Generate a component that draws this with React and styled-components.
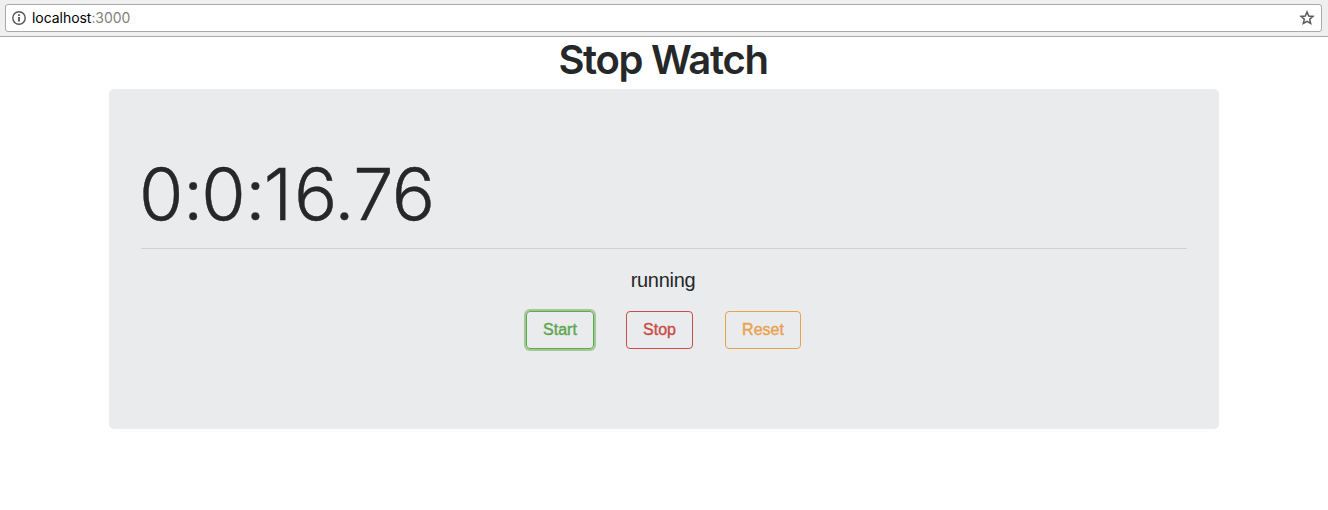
import React from 'react';
import styled, { createGlobalStyle } from 'styled-components';

const Global = createGlobalStyle`
  * { box-sizing: border-box; }
  body { margin: 0; background: #fff; color: #252729; font-family: "Liberation Sans", sans-serif; font-size: 16px; line-height: 1.5; }
`;
const BrowserBar = styled.header`
  height: 37px; padding: 4px 6px 4px 5px; background: #efefef; border-bottom: 1px solid #a9a9a9;
`;
const AddressField = styled.div`
  height: 28px; display: flex; align-items: center; padding: 0 6px; background: #fff;
  border: 1px solid #a9a9a9; border-radius: 3px; font: 14px/20px Inter, sans-serif; color: #000;
`;
const Address = styled.div`flex: 1; margin-left: 6px; letter-spacing: -0.05px; font-feature-settings: "calt" 0;`;
const Port = styled.span`color: #7f7f7f;`;
const Container = styled.main`width: 1110px; margin: 0 auto;`;
const Title = styled.h1`
  margin: 0; height: 52px; padding: 1px 2px 0 0; font: 600 40px/44px Inter, sans-serif; text-align: center;
  letter-spacing: -1.3px;
`;
const Panel = styled.section`
  height: 340px; padding: 64px 32px; background: #e9ebec; border-radius: 5px;
`;
const Time = styled.div`
  height: 79px; margin-left: -2px; padding-top: 1px; font: 300 72px/79px Inter, sans-serif; letter-spacing: -0.5px;
  font-feature-settings: "calt" 0; -webkit-text-stroke: 0.4px currentColor;
`;
const Colon = styled.span`letter-spacing: -2px;`;
const WideDigit = styled.span`letter-spacing: 2px;`;
const Divider = styled.hr`margin: 16px 0 20px; border: 0; border-top: 1px solid #cfd1d2;`;
const Status = styled.p`
  margin: -1px 0 0; padding-right: 2px; font-size: 20px; line-height: 24px;
  text-align: center; letter-spacing: -0.3px;
`;
const Actions = styled.div`display: flex; justify-content: center; gap: 32px; margin-top: 19px; padding-right: 2px;`;
const Button = styled.button`
  width: ${p => p.$width}px; height: 38px; padding: 0 0 1px 1px; border: 1px solid ${p => p.$color}; border-radius: 4px;
  background: transparent; color: ${p => p.$color}; font: 16px/24px "Liberation Sans", sans-serif; -webkit-text-stroke: 0.4px currentColor;
  box-shadow: ${p => p.$active ? '0 0 0 2px #a0c996' : 'none'};
`;

export default function App() {
  return <>
    <Global />
    <BrowserBar><AddressField>
      <svg width="14" height="14" viewBox="0 0 14 14" fill="none" stroke="#555" strokeWidth="1.4"><circle cx="7" cy="7" r="6.2" /><path d="M7 6v4.5M7 3.3v1.6" strokeWidth="1.8" /></svg>
      <Address>localhost<Port>:3000</Port></Address>
      <svg width="16" height="16" viewBox="0 0 16 16" fill="none" stroke="#5a5a5a" strokeWidth="1.5"><path d="m8 2 1.7 4 4.3.4-3.3 2.9 1 4.2L8 11.3l-3.7 2.2 1-4.2L2 6.4 6.3 6Z" /></svg>
    </AddressField></BrowserBar>
    <Container>
      <Title>Stop Watch</Title>
      <Panel>
        <Time>0<Colon>:</Colon>0<Colon>:</Colon><WideDigit>1</WideDigit>6.76</Time>
        <Divider />
        <Status>running</Status>
        <Actions>
          <Button $width={68} $color="#5fa651" $active>Start</Button>
          <Button $width={67} $color="#c74e49">Stop</Button>
          <Button $width={76} $color="#e9a14e">Reset</Button>
        </Actions>
      </Panel>
    </Container>
  </>;
}
